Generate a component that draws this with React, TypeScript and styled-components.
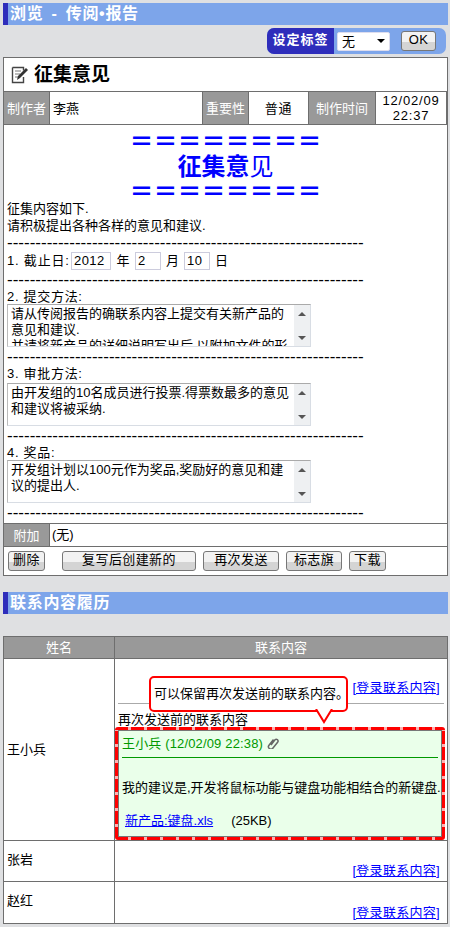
import React from "react";
import styled, {createGlobalStyle} from "styled-components";

const GlobalStyle = createGlobalStyle`
  html, body {
    margin: 0;
    padding: 0;
    background: #dfe0e2;
  }

  body {
    font-family: "Liberation Sans", "Noto Sans CJK SC", sans-serif;
    font-size: 13px;
    line-height: 15px;
    color: #000;
  }
`;

const Page = styled.div`
  width: 450px;
  height: 927px;
  overflow: hidden;
  padding: 3px 2px 0 3px;
  box-sizing: border-box;
`;

const SectionBar = styled.div<{$gap?: number}>`
  height: 22px;
  background: #7da5ea;
  border-left: 5px solid #2e2dbb;
  padding-left: 2px;
  color: #fff;
  font-size: 16px;
  font-weight: 700;
  line-height: 21px;
  letter-spacing: 0.7px;
  word-spacing: 3px;
  margin-top: ${p => p.$gap || 0}px;
`;

const TagRow = styled.div`
  display: flex;
  justify-content: flex-end;
  padding: 3px 2px 3px 0;
`;

const TagBar = styled.div`
  display: flex;
  align-items: center;
  width: 179px;
  height: 26px;
  background: #7da5ea;
  border-radius: 7px;
  overflow: hidden;
`;

const TagLabel = styled.div`
  width: 67px;
  height: 26px;
  background: #2e2dbb;
  color: #fff;
  font-weight: 700;
  font-size: 13px;
  line-height: 23px;
  letter-spacing: 1px;
  text-align: center;
  flex: none;
`;

const TagSelect = styled.div`
  width: 53px;
  height: 19px;
  margin-left: 3px;
  padding-left: 4px;
  box-sizing: border-box;
  background: #fff;
  border: 1px solid #dde;
  border-radius: 2px;
  display: flex;
  align-items: center;
  justify-content: space-between;
  padding-right: 4px;

  &:after {
    content: "";
    border-left: 4px solid transparent;
    border-right: 4px solid transparent;
    border-top: 4px solid #000;
  }
`;

const Button = styled.button<{$width: number; $gap?: number}>`
  width: ${p => p.$width}px;
  height: 20px;
  margin-left: ${p => p.$gap || 0}px;
  padding: 0 0 2px;
  flex: none;
  box-sizing: border-box;
  border: 1px solid #777;
  border-radius: 3px;
  background: linear-gradient(#f2f2f2 0 55%, #d4d4d4 55% 100%);
  font-family: inherit;
  font-size: 13px;
  line-height: 14px;
  letter-spacing: 0.4px;
  color: #000;
`;

const Card = styled.div`
  width: 445px;
  box-sizing: border-box;
  border: 1px solid #6e6e6e;
  background: #fff;
`;

const TitleRow = styled.div`
  height: 33px;
  display: flex;
  align-items: center;
  padding-left: 7px;
  gap: 6px;
  font-size: 19px;
  font-weight: 700;
`;

const MetaRow = styled.div`
  display: flex;
  height: 34px;
  border-top: 1px solid #6e6e6e;
  border-bottom: 1px solid #6e6e6e;
  box-sizing: border-box;
`;

const MetaLabel = styled.div<{$width: number}>`
  width: ${p => p.$width}px;
  flex: none;
  background: #999;
  color: #fff;
  display: flex;
  align-items: center;
  justify-content: center;
`;

const MetaValue = styled.div<{$width: number; $center?: boolean}>`
  width: ${p => p.$width}px;
  flex: none;
  box-sizing: border-box;
  padding-left: ${p => p.$center ? 0 : 3}px;
  border-left: 1px solid #6e6e6e;
  border-right: 1px solid #6e6e6e;
  display: flex;
  align-items: center;
  justify-content: ${p => p.$center ? "center" : "flex-start"};
  text-align: center;
  line-height: 15px;
  letter-spacing: ${p => p.$center ? "0.8px" : 0};
`;

const Body = styled.div`
  padding: 4px 3px 0;
  height: 398px;
  box-sizing: border-box;
  overflow: hidden;
`;

const Banner = styled.div`
  color: #0000ff;
  font-size: 24px;
  line-height: 25px;
  font-weight: 700;
  text-align: center;
  width: 100%;
`;

const ThinChar = styled.span`
  font-weight: 400;
`;

const Para = styled.div`
  line-height: 17px;
  margin-top: -4px;
`;

const Dashes = styled.div<{$height?: number}>`
  width: 357px;
  overflow: hidden;
  white-space: nowrap;
  height: ${p => p.$height || 19}px;
  line-height: ${p => p.$height || 19}px;
  font-size: 17px;
`;

const DateRow = styled.div`
  display: flex;
  align-items: center;
  height: 19px;
`;

const DateLabel = styled.span`
  width: 64px;
  flex: none;
  letter-spacing: 0.8px;
  white-space: nowrap;
`;

const DateInput = styled.div<{$width: number}>`
  width: ${p => p.$width}px;
  height: 18px;
  box-sizing: border-box;
  border: 1px solid #ccd;
  padding-left: 2px;
  line-height: 15px;
  letter-spacing: 0.4px;
`;

const DateUnit = styled.span<{$width: number}>`
  width: ${p => p.$width}px;
  text-align: center;
  flex: none;
`;

const FieldLabel = styled.div`
  height: 15px;
  line-height: 15px;
  letter-spacing: 0.7px;
`;

const TallFieldLabel = styled(FieldLabel)`
  height: 17px;
`;

const TextBox = styled.div`
  display: flex;
  width: 304px;
  height: 43px;
  box-sizing: border-box;
  border: 1px solid #d8dde4;
  border-top-color: #aaa;
  border-left-color: #bbb;
`;

const TextBoxText = styled.div`
  flex: 1;
  overflow: hidden;
  padding: 1px 3px 0;
  line-height: 16px;
`;

const ScrollTrack = styled.div`
  width: 16px;
  flex: none;
  background: #eef0f2;
  display: flex;
  flex-direction: column;
  align-items: center;
  justify-content: space-between;
  padding: 7px 0 6px;
  box-sizing: border-box;
`;

const Arrow = styled.div<{$up?: boolean}>`
  border-left: 4px solid transparent;
  border-right: 4px solid transparent;
  ${p => p.$up ? "border-bottom: 4px solid #555;" : "border-top: 4px solid #555;"}
`;

const AttachRow = styled.div`
  display: flex;
  height: 24px;
  border-top: 1px solid #6e6e6e;
  border-bottom: 1px solid #6e6e6e;
  box-sizing: border-box;
`;

const AttachLabel = styled(MetaLabel)`
  border-right: 1px solid #6e6e6e;
`;

const AttachValue = styled.div`
  padding-left: 2px;
  line-height: 22px;
`;

const ActionRow = styled.div`
  height: 28px;
  display: flex;
  align-items: center;
  padding-left: 4px;
`;

const HistoryTable = styled.div`
  margin-top: 22px;
  width: 445px;
  box-sizing: border-box;
  border: 1px solid #6e6e6e;
  background: #fff;
  display: grid;
  grid-template-columns: 110px minmax(0, 1fr);
  grid-template-rows: 22px 182px 41px 41px;
`;

const HeadCell = styled.div<{$first?: boolean}>`
  background: #999;
  color: #fff;
  display: flex;
  align-items: center;
  justify-content: center;
  border-left: ${p => p.$first ? "none" : "1px solid #6e6e6e"};
  border-bottom: 1px solid #6e6e6e;
`;

const NameCell = styled.div<{$tall?: boolean; $last?: boolean}>`
  padding: ${p => p.$tall ? "83px" : "11px"} 0 0 3px;
  border-bottom: ${p => p.$last ? "none" : "1px solid #6e6e6e"};
`;

const ContentCell = styled.div<{$last?: boolean}>`
  position: relative;
  border-left: 1px solid #6e6e6e;
  border-bottom: ${p => p.$last ? "none" : "1px solid #6e6e6e"};
  display: flex;
  flex-direction: column;
  padding: 0 3px;
`;

const RegisterLink = styled.a`
  color: #0000ff;
  text-decoration: underline;
  align-self: flex-end;
  margin-right: 4px;
  letter-spacing: 0.3px;
`;

const EmptyContent = styled(ContentCell)`
  justify-content: flex-end;
  padding-bottom: 3px;
`;

const TopLinkRow = styled.div`
  height: 45px;
  display: flex;
  justify-content: flex-end;
  align-items: flex-end;
  padding-bottom: 8px;
  box-sizing: border-box;
  border-bottom: 1px solid #aaa;
`;

const PrevLabel = styled.div`
  height: 23px;
  line-height: 15px;
  padding-top: 8px;
  box-sizing: border-box;
`;

const Highlight = styled.div`
  margin: 0 -1px 0 -3px;
  height: 113px;
  box-sizing: border-box;
  padding: 3px;
  border-radius: 3px;
  background:
    repeating-linear-gradient(90deg, #f00 0 13px, #ffb0b0 13px 16px) left top / 100% 3px no-repeat,
    repeating-linear-gradient(90deg, #f00 0 13px, #ffb0b0 13px 16px) left bottom / 100% 3px no-repeat,
    repeating-linear-gradient(0deg, #f00 0 13px, #ffb0b0 13px 16px) left top / 3px 100% no-repeat,
    repeating-linear-gradient(0deg, #f00 0 13px, #ffb0b0 13px 16px) right top / 3px 100% no-repeat;
`;

const MessageBox = styled.div`
  height: 107px;
  box-sizing: border-box;
  border: 1px solid #777;
  background: #eaffea;
  padding: 0 3px;
`;

const MessageHead = styled.div`
  height: 27px;
  border-bottom: 1px solid #090;
  color: #090;
  display: flex;
  align-items: center;
  gap: 4px;
  letter-spacing: 0.15px;
  padding-bottom: 2px;
  box-sizing: border-box;
`;

const MessageText = styled.div`
  margin-top: 22px;
  white-space: nowrap;
  letter-spacing: -0.02px;
`;

const FileRow = styled.div`
  margin-top: 18px;
  padding-left: 3px;
  display: flex;
  gap: 18px;
`;

const FileLink = styled.a`
  color: #0000ff;
  text-decoration: underline;
`;

const Tooltip = styled.div`
  position: absolute;
  left: 34px;
  top: 17px;
  width: 199px;
  height: 36px;
  box-sizing: border-box;
  border: 2px solid #f00;
  border-radius: 5px;
  background: #fff;
  padding-left: 3px;
  line-height: 32px;
  white-space: nowrap;
  z-index: 2;
`;

const TooltipTail = styled.svg`
  position: absolute;
  left: 199px;
  top: 50px;
  z-index: 3;
`;

const NoteIcon = () => (
    <svg width="17" height="18" viewBox="0 0 17 18">
        <path d="M1.500 1.500h11v3M12.500 11v5.500h-11v-15" fill="none" stroke="#444" strokeWidth="1.400"/>
        <path d="M4 5h6M4 8h5M4 11h3" stroke="#777"/>
        <path d="M6 14l1-4 8-8 2 2-8 8z" fill="#333"/>
    </svg>
);

const ClipIcon = () => (
    <svg width="12" height="12" viewBox="0 0 12 12">
        <path d="M4 8l4-5.200a1.800 1.800 0 0 1 2.800 2.200l-5 6.200a2.400 2.400 0 0 1-3.800-3l4.500-5.700" fill="none" stroke="#666" strokeWidth="1.500"/>
    </svg>
);

const dashes = "-".repeat(63);

const ScrollBox = ({children}: {children: React.ReactNode}) => (
    <TextBox>
        <TextBoxText>{children}</TextBoxText>
        <ScrollTrack>
            <Arrow $up/>
            <Arrow/>
        </ScrollTrack>
    </TextBox>
);

const App = () => {
    return (
        <Page>
            <GlobalStyle/>
            <SectionBar>浏览 - 传阅•报告</SectionBar>
            <TagRow>
                <TagBar>
                    <TagLabel>设定标签</TagLabel>
                    <TagSelect>无</TagSelect>
                    <Button $width={35} $gap={11}>OK</Button>
                </TagBar>
            </TagRow>

            <Card>
                <TitleRow>
                    <NoteIcon/>
                    征集意见
                </TitleRow>
                <MetaRow>
                    <MetaLabel $width={45}>制作者</MetaLabel>
                    <MetaValue $width={154}>李燕</MetaValue>
                    <MetaLabel $width={45}>重要性</MetaLabel>
                    <MetaValue $width={61} $center>普通</MetaValue>
                    <MetaLabel $width={66}>制作时间</MetaLabel>
                    <MetaValue $width={72} $center>12/02/09<br/>22:37</MetaValue>
                </MetaRow>
                <Body>
                    <Banner>＝＝＝＝＝＝＝＝</Banner>
                    <Banner>征集意<ThinChar>见</ThinChar></Banner>
                    <Banner>＝＝＝＝＝＝＝＝</Banner>
                    <Para>征集内容如下.<br/>请积极提出各种各样的意见和建议.</Para>
                    <Dashes $height={17}>{dashes}</Dashes>
                    <DateRow>
                        <DateLabel>1. 截止日:</DateLabel>
                        <DateInput $width={40}>2012</DateInput>
                        <DateUnit $width={24}>年</DateUnit>
                        <DateInput $width={26}>2</DateInput>
                        <DateUnit $width={23}>月</DateUnit>
                        <DateInput $width={26}>10</DateInput>
                        <DateUnit $width={23}>日</DateUnit>
                    </DateRow>
                    <Dashes>{dashes}</Dashes>
                    <FieldLabel>2. 提交方法:</FieldLabel>
                    <ScrollBox>
                        请从传阅报告的确联系内容上提交有关新产品的意见和建议.<br/>
                        并请将新产品的详细说明写出后,以附加文件的形式提交.
                    </ScrollBox>
                    <Dashes>{dashes}</Dashes>
                    <TallFieldLabel>3. 审批方法:</TallFieldLabel>
                    <ScrollBox>由开发组的10名成员进行投票.得票数最多的意见和建议将被采纳.</ScrollBox>
                    <Dashes>{dashes}</Dashes>
                    <FieldLabel>4. 奖品:</FieldLabel>
                    <ScrollBox>开发组计划以100元作为奖品,奖励好的意见和建议的提出人.</ScrollBox>
                    <Dashes>{dashes}</Dashes>
                </Body>
                <AttachRow>
                    <AttachLabel $width={45}>附加</AttachLabel>
                    <AttachValue>(无)</AttachValue>
                </AttachRow>
                <ActionRow>
                    <Button $width={37}>删除</Button>
                    <Button $width={134} $gap={17}>复写后创建新的</Button>
                    <Button $width={76} $gap={7}>再次发送</Button>
                    <Button $width={56} $gap={7}>标志旗</Button>
                    <Button $width={37} $gap={7}>下载</Button>
                </ActionRow>
            </Card>

            <SectionBar $gap={16}>联系内容履历</SectionBar>

            <HistoryTable>
                <HeadCell $first>姓名</HeadCell>
                <HeadCell>联系内容</HeadCell>

                <NameCell $tall>王小兵</NameCell>
                <ContentCell>
                    <TopLinkRow>
                        <RegisterLink>[登录联系内容]</RegisterLink>
                    </TopLinkRow>
                    <Tooltip>可以保留再次发送前的联系内容。</Tooltip>
                    <TooltipTail width="20" height="16" viewBox="0 0 20 16">
                        <path d="M2 0l8 13 8-13" fill="#fff" stroke="#f00" strokeWidth="2"/>
                    </TooltipTail>
                    <PrevLabel>再次发送前的联系内容</PrevLabel>
                    <Highlight>
                        <MessageBox>
                            <MessageHead>王小兵 (12/02/09 22:38) <ClipIcon/></MessageHead>
                            <MessageText>我的建议是,开发将鼠标功能与键盘功能相结合的新键盘.</MessageText>
                            <FileRow>
                                <FileLink>新产品:键盘.xls</FileLink>
                                <span>(25KB)</span>
                            </FileRow>
                        </MessageBox>
                    </Highlight>
                </ContentCell>

                <NameCell>张岩</NameCell>
                <EmptyContent>
                    <RegisterLink>[登录联系内容]</RegisterLink>
                </EmptyContent>

                <NameCell $last>赵红</NameCell>
                <EmptyContent $last>
                    <RegisterLink>[登录联系内容]</RegisterLink>
                </EmptyContent>
            </HistoryTable>
        </Page>
    );
};

export default App;
